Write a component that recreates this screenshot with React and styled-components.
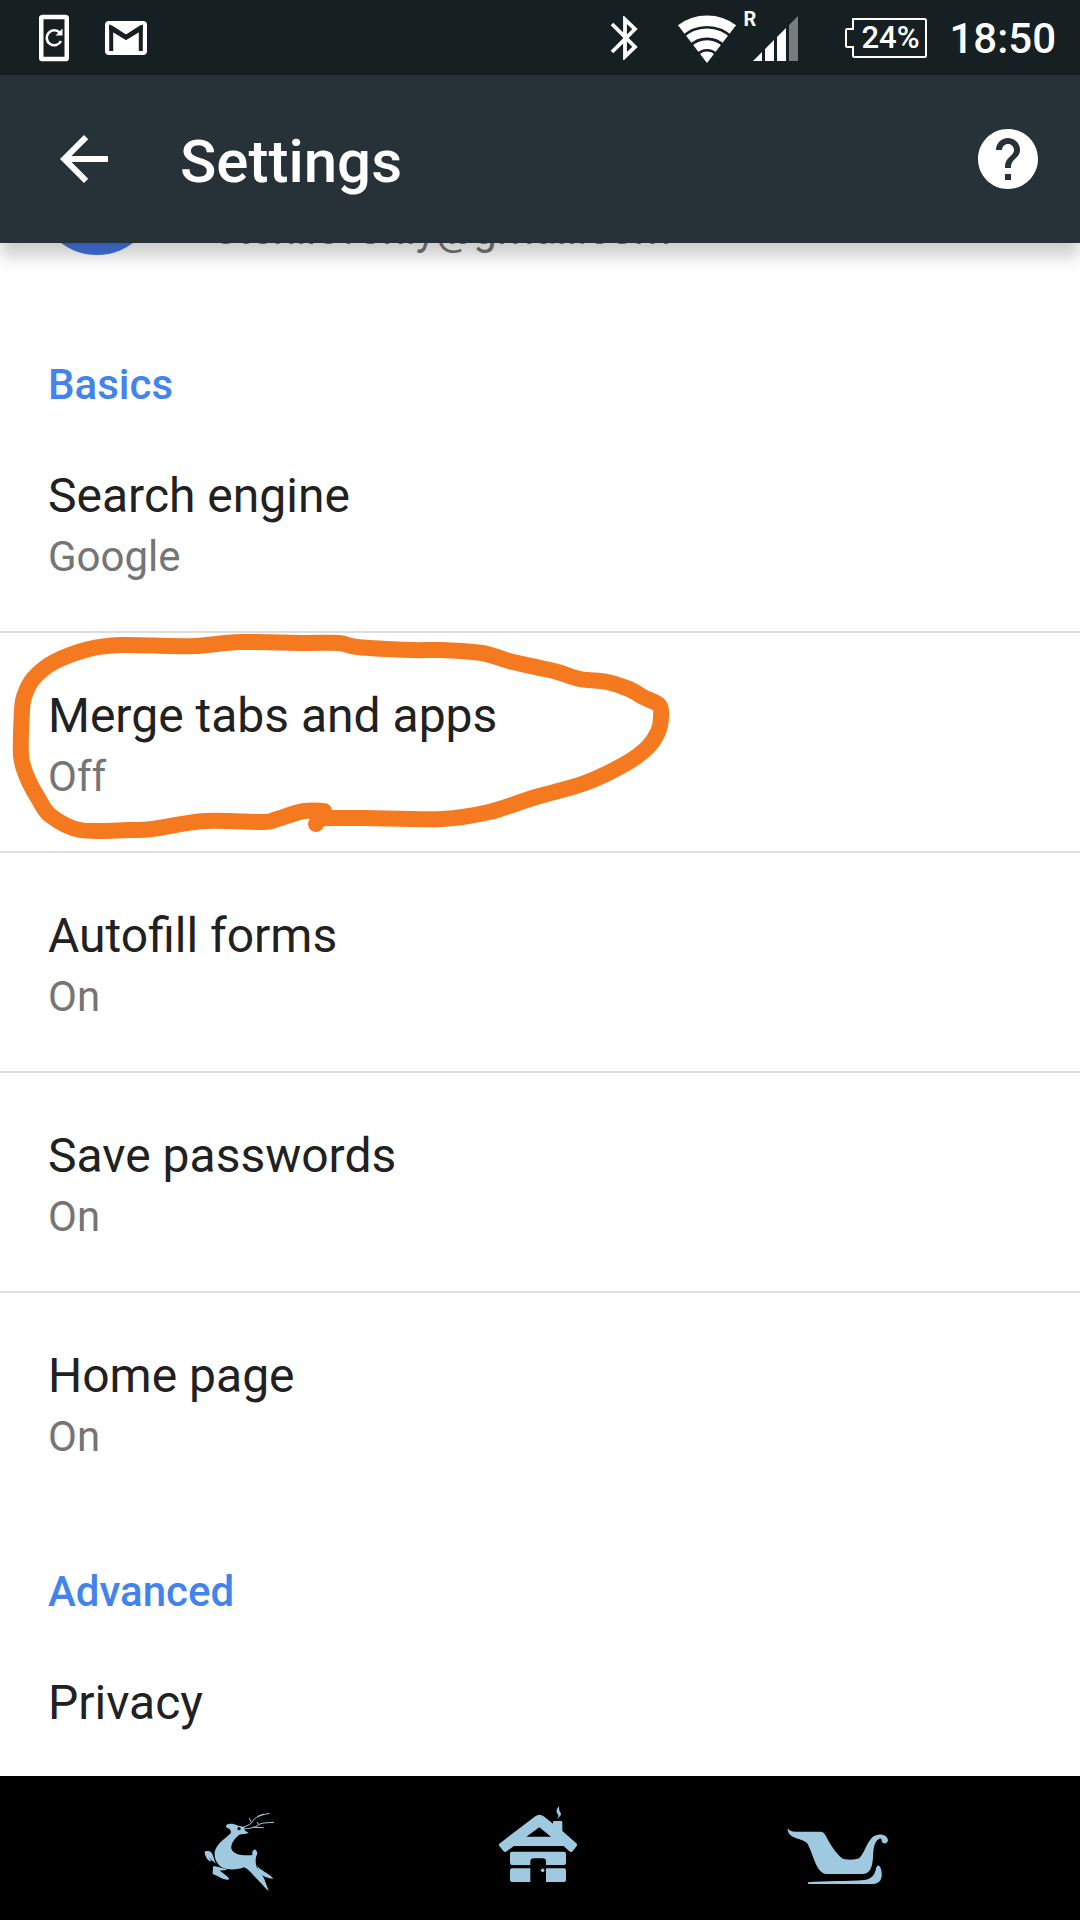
import React from 'react';
import styled, { createGlobalStyle } from 'styled-components';
import { MdArrowBack, MdHelp } from 'react-icons/md';

const BASICS = [
  { title: 'Search engine', value: 'Google' },
  { title: 'Merge tabs and apps', value: 'Off', marked: true },
  { title: 'Autofill forms', value: 'On' },
  { title: 'Save passwords', value: 'On' },
  { title: 'Home page', value: 'On' },
];

const ADVANCED = [{ title: 'Privacy' }];

const MARKER_POINTS = [
  [316, 191], [320, 186], [335, 185], [366, 185], [442, 186], [489, 179], [536, 164], [585, 150],
  [625, 131], [647, 115], [658, 99], [661, 84], [659, 72], [643, 64], [629, 56],
  [607, 49], [580, 46], [554, 38], [513, 29], [482, 20], [442, 17], [411, 17],
  [357, 14], [339, 10], [304, 10], [241, 9], [196, 13], [170, 13], [121, 12],
  [89, 16], [54, 29], [33, 46], [24, 64], [22, 78], [21, 122], [27, 144],
  [38, 165], [51, 183], [80, 197], [129, 197], [152, 196], [205, 188],
  [263, 189], [277, 186], [304, 178], [324, 178],
];

// Catmull-Rom curve through all the points
const smoothPath = (points) => {
  let d = `M${points[0].join(' ')}`;
  for (let i = 0; i < points.length - 1; i++) {
    const prev = points[i - 1] || points[i];
    const from = points[i];
    const to = points[i + 1];
    const next = points[i + 2] || to;
    const c1 = [0, 1].map((k) => from[k] + (to[k] - prev[k]) / 6);
    const c2 = [0, 1].map((k) => to[k] - (next[k] - from[k]) / 6);
    d += ` C${c1.join(' ')} ${c2.join(' ')} ${to.join(' ')}`;
  }
  return d;
};

const PhoneIcon = () => (
  <svg width="30" height="48" viewBox="0 0 30 48" fill="none" stroke="#fff">
    <rect x="2.2" y="3" width="25.6" height="42" rx="1.5" strokeWidth="4.6" />
    <path d="M21 19A7.5 7.5 0 1 0 22 27" strokeWidth="2.6" />
    <path d="M23.5 14.5V21.5H16.5Z" fill="#fff" stroke="none" />
  </svg>
);

const MailIcon = () => (
  <svg width="42" height="34" viewBox="0 0 42 34">
    <rect width="42" height="34" rx="4" fill="#fff" />
    <path d="M6.2 30V7L21 16.5L35.8 7V30" fill="none" stroke="#161f21" strokeWidth="4" />
    <path d="M4.2 4.5H7L21 13.5L35 4.5H37.8V9L21 19L4.2 9Z" fill="#161f21" />
  </svg>
);

const BluetoothIcon = () => (
  <svg width="28" height="44" viewBox="0 0 28 44" fill="none" stroke="#fff" strokeWidth="3.8">
    <path d="M2 8L25 31L15 40.5V3.5L25 13L2 36" />
  </svg>
);

const WifiIcon = () => (
  <svg width="58" height="48" viewBox="0 0 58 48">
    <defs>
      <clipPath id="wifi-fan">
        <path d="M-1 9L29 48L59 9V-4H-1Z" />
      </clipPath>
    </defs>
    <g clipPath="url(#wifi-fan)" fill="none" stroke="#fff">
      <circle cx="29" cy="48" r="42.3" strokeWidth="10.4" />
      <circle cx="29" cy="48" r="30" strokeWidth="8.8" />
      <circle cx="29" cy="48" r="18.4" strokeWidth="8.6" />
      <circle cx="29" cy="48" r="5.7" strokeWidth="11.4" />
    </g>
  </svg>
);

const SignalIcon = () => (
  <svg width="46" height="46" viewBox="0 0 46 46" fill="#fff">
    <path d="M0 45L9 36V45Z" />
    <path d="M12 45V33L21 24V45Z" />
    <path d="M24 45V21L33 12V45Z" />
    <path d="M36 45V9L45 0V45Z" opacity="0.42" />
  </svg>
);

const ReindeerIcon = () => (
  <svg width="100" height="100" viewBox="0 -6 300 300" fill="#9fc9de">
    <path d="M110 74C118 70 132 71 140 76L163 81L165 92L176 98C166 103 155 101 148 104C132 116 122 132 124 146C130 162 152 168 188 165C184 157 189 151 195 148C202 154 204 160 199 168C196 178 196 190 200 200L222 235L236 272C229 270 212 246 190 226C180 214 172 206 162 202C146 209 118 211 100 204C82 196 72 176 74 156C80 130 104 118 122 100C124 92 120 87 114 85C108 82 106 77 110 74Z" />
    <path d="M44 156C48 151 60 152 65 158C70 168 74 180 77 191C71 185 62 180 56 172L64 183C56 188 44 168 44 156Z" />
    <path d="M69 200C76 196 94 206 113 208C104 212 94 212 88 211C98 220 114 228 118 238C106 244 84 228 68 222Z" />
    <path d="M202 198C212 212 240 222 250 236C238 237 216 228 208 220Z" />
    <circle cx="147" cy="86" r="5" fill="#000" />
    <g fill="none" stroke="#9fc9de">
      <path d="M160 82C174 76 184 72 188 64C194 52 208 46 238 40" strokeWidth="3" />
      <path d="M184 68L178 54M203 49L222 42" strokeWidth="3" />
      <path d="M166 86C182 86 202 80 208 73C218 68 234 68 252 67" strokeWidth="3" />
      <path d="M186 82L221 83M206 74L202 66" strokeWidth="3" />
    </g>
  </svg>
);

const CabinIcon = () => (
  <svg width="100" height="100" viewBox="15 9 300 300" fill="#9fc9de">
    <path
      fillRule="evenodd"
      d="M43 146L151 64Q163 55 176 64L204 86V81Q204 78 208 78H228Q232 78 232 82V108L274 145Q278 149 275 153L263 169Q258 174 252 168L236 153H87L65 169Q59 174 55 168L43 153Q40 149 43 146ZM124 125H198L163 97Z"
    />
    <path d="M221 34C210 48 216 54 220 60C221 64 218 68 217 71C229 62 230 56 225 51C221 46 224 40 221 34Z" />
    <path d="M81 170H237Q243 170 243 177V203Q243 210 237 210H183V200Q183 190 173 190H147Q136 190 136 200V210H81Q75 210 75 203V177Q75 170 81 170Z" />
    <path d="M81 220H136V261H81Q75 261 75 255V227Q75 220 81 220Z" />
    <path d="M183 220H237Q243 220 243 227V255Q243 261 237 261H183Z" />
    <circle cx="173" cy="226" r="5.5" />
  </svg>
);

const SleighIcon = () => (
  <svg width="120" height="100" viewBox="15 -51 360 300" fill="#9fc9de">
    <path d="M38 39C42 47 50 50 62 50H136C144 50 148 54 153 64C168 94 185 116 199 128C208 136 242 135 252 130C266 120 274 84 292 67C310 52 338 58 339 76C338 88 322 88 320 78C321 72 317 69 312 72C296 80 295 106 294 128C292 158 284 177 262 177H152C122 172 114 112 96 84C78 68 36 72 38 39Z" />
    <path d="M98 202C150 197 220 199 268 195C292 192 300 178 303 160C306 149 313 148 317 159C324 180 322 206 294 207H100Z" />
  </svg>
);

const SettingList = ({ items }) => (
  <List>
    {items.map((item) => (
      <Item key={item.title}>
        <Row type="button">
          <RowTitle>{item.title}</RowTitle>
          {item.value && <RowValue>{item.value}</RowValue>}
        </Row>
        {item.marked && (
          <Marker width="680" height="220" viewBox="0 0 680 220" aria-hidden="true">
            <path d={smoothPath(MARKER_POINTS)} />
          </Marker>
        )}
      </Item>
    ))}
  </List>
);

const App = () => (
  <Screen>
    <GlobalStyle />
    <StatusBar>
      <Notifications>
        <PhoneIcon />
        <MailIcon />
      </Notifications>
      <BluetoothIcon />
      <Network>
        <WifiIcon />
        <Roaming>R</Roaming>
        <SignalIcon />
      </Network>
      <Battery>
        <svg width="82" height="40" viewBox="0 0 82 40" fill="none" stroke="#fff" strokeWidth="2">
          <path d="M8.5 1H79.5Q81 1 81 2.5V37.5Q81 39 79.5 39H9.5Q8 39 8 37.5V29H2Q1 29 1 28V12Q1 11 2 11H8V1Z" />
        </svg>
        <BatteryLevel>24%</BatteryLevel>
      </Battery>
      <Clock>18:50</Clock>
    </StatusBar>

    <Header>
      <IconButton type="button" aria-label="Back">
        <MdArrowBack />
      </IconButton>
      <Title>Settings</Title>
      <IconButton type="button" aria-label="Help">
        <MdHelp />
      </IconButton>
    </Header>

    <Content>
      <Account>
        <Avatar />
        <Email>stenilevonly@gmail.com</Email>
      </Account>
      <SectionTitle>Basics</SectionTitle>
      <SettingList items={BASICS} />
      <SectionTitle>Advanced</SectionTitle>
      <SettingList items={ADVANCED} />
    </Content>

    <NavBar>
      <NavButton type="button" aria-label="Back">
        <ReindeerIcon />
      </NavButton>
      <NavButton type="button" aria-label="Home">
        <CabinIcon />
      </NavButton>
      <NavButton type="button" aria-label="Recent apps">
        <SleighIcon />
      </NavButton>
    </NavBar>
  </Screen>
);

export default App;

// Styled Components

const GlobalStyle = createGlobalStyle`
  * {
    box-sizing: border-box;
  }

  body {
    margin: 0;
    background: #fff;
    font-family: Roboto, 'Liberation Sans', sans-serif;
  }

  button {
    margin: 0;
    padding: 0;
    border: none;
    background: none;
    color: inherit;
    font: inherit;
    cursor: pointer;
  }

  svg {
    display: block;
    flex-shrink: 0;
  }
`;

const Screen = styled.div`
  display: flex;
  flex-direction: column;
  height: 100vh;
  overflow: hidden;
`;

const StatusBar = styled.div`
  display: flex;
  align-items: center;
  flex-shrink: 0;
  height: 75px;
  padding: 0 24px 0 39px;
  background: #161f21;
  color: #fff;
  font-weight: 500;
`;

const Notifications = styled.div`
  display: flex;
  align-items: center;
  gap: 36px;
  margin-right: auto;
`;

const Network = styled.div`
  display: flex;
  align-items: center;
  padding-top: 2px;
  margin: 0 46px 0 40px;
`;

const Roaming = styled.span`
  align-self: flex-start;
  width: 16px;
  margin-left: 7px;
  margin-right: -6px;
  font-size: 20px;
  font-weight: 700;
  line-height: 8px;
`;

const Battery = styled.div`
  display: grid;
  align-items: center;
  margin-right: 22px;

  > * {
    grid-area: 1 / 1;
  }
`;

const BatteryLevel = styled.span`
  padding-left: 8px;
  font-size: 31px;
  line-height: 40px;
  text-align: center;
`;

const Clock = styled.time`
  padding-top: 2px;
  font-size: 42px;
  line-height: 48px;
`;

const Header = styled.header`
  position: relative;
  z-index: 1;
  display: flex;
  align-items: center;
  flex-shrink: 0;
  height: 168px;
  padding: 0 36px 0 48px;
  background: #263238;
  color: #fff;
  box-shadow: 0 13px 16px rgba(0, 0, 0, 0.2);
`;

const IconButton = styled.button`
  font-size: 72px;
  line-height: 1;
`;

const Title = styled.h1`
  flex: 1;
  margin: 0;
  padding: 6px 0 0 60px;
  font-size: 60px;
  font-weight: 500;
  line-height: 72px;
`;

const Content = styled.main`
  flex: 1;
  min-height: 0;
  overflow-y: auto;
  scrollbar-width: none;
`;

const Account = styled.div`
  display: flex;
  align-items: flex-end;
  gap: 58px;
  margin-top: -108px;
  padding: 0 37px 46px;
`;

const Avatar = styled.div`
  width: 120px;
  height: 120px;
  margin-bottom: 5px;
  border-radius: 50%;
  background: #4173e0;
`;

const Email = styled.span`
  color: #757575;
  font-size: 42px;
  line-height: 60px;
`;

const SectionTitle = styled.h2`
  margin: 0;
  padding: 54px 48px 3px;
  color: #4283ee;
  font-size: 42px;
  font-weight: 500;
  line-height: 50px;
`;

const List = styled.ul`
  margin: 0;
  padding: 0;
  list-style: none;
`;

const Item = styled.li`
  position: relative;
  border-bottom: 2px solid #dedede;

  &:last-child {
    border-bottom-color: transparent;
  }
`;

const Row = styled.button`
  display: flex;
  flex-direction: column;
  gap: 1px;
  width: 100%;
  padding: 53px 48px 44px;
  line-height: 60px;
  text-align: left;
`;

const RowTitle = styled.span`
  color: #212121;
  font-size: 48px;
`;

const RowValue = styled.span`
  color: #757575;
  font-size: 42px;
`;

// hand-drawn ring lying over the row
const Marker = styled.svg`
  position: absolute;
  top: 0;
  left: 0;
  overflow: visible;
  pointer-events: none;

  path {
    fill: none;
    stroke: #f4791f;
    stroke-width: 16px;
    stroke-linecap: round;
    stroke-linejoin: round;
  }
`;

const NavBar = styled.nav`
  display: flex;
  flex-shrink: 0;
  height: 144px;
  padding: 0 90px;
  background: #000;
`;

const NavButton = styled.button`
  display: flex;
  flex: 1;
  align-items: center;
  justify-content: center;
`;
